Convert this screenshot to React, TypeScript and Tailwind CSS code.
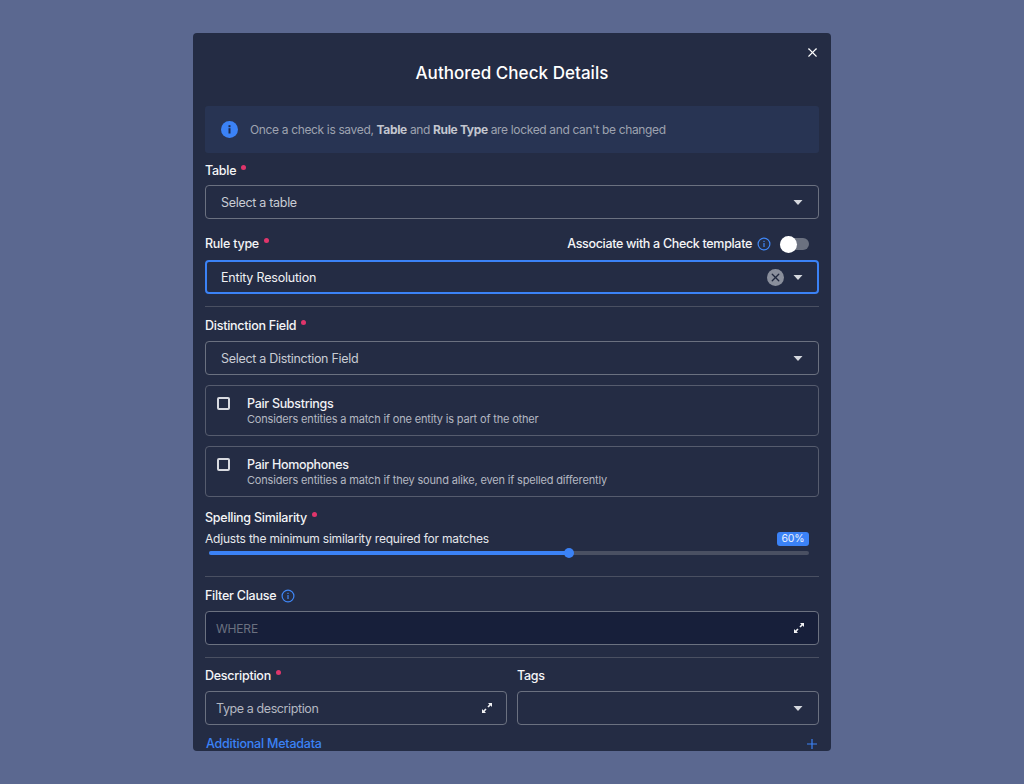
import React from 'react';
import { X } from 'lucide-react';

const Dot = () => <span className="ml-[5px] mb-[7px] w-[5px] h-[5px] rounded-full bg-[#e0356b]" />;

const Caret = () => (
  <svg width="10" height="5" viewBox="0 0 10 5" className="shrink-0">
    <path d="M0.5 0 H9.5 L5 5 Z" fill="#d5d8de" />
  </svg>
);

const InfoOutline = () => (
  <svg width="14" height="14" viewBox="0 0 14 14" fill="none" className="shrink-0">
    <circle cx="7" cy="7" r="5.9" stroke="#3f86f6" strokeWidth="1.2" />
    <rect x="6.4" y="6" width="1.2" height="4" fill="#3f86f6" />
    <rect x="6.4" y="3.8" width="1.2" height="1.2" fill="#3f86f6" />
  </svg>
);

const Expand = () => (
  <svg width="10" height="10" viewBox="0 0 10 10" className="shrink-0" fill="#f1f2f4">
    <path d="M6 0 H10 V4 L8.6 2.6 L6.6 4.6 L5.4 3.4 L7.4 1.4 Z" />
    <path d="M4 10 H0 V6 L1.4 7.4 L3.4 5.4 L4.6 6.6 L2.6 8.6 Z" />
  </svg>
);

const Label = ({ text, required }: { text: string; required?: boolean }) => (
  <div className="flex items-center h-[18px] text-[12.5px] tracking-[-0.25px] font-medium text-[#f4f5f7]">
    {text}
    {required && <Dot />}
  </div>
);

const Select = ({ text }: { text: string }) => (
  <div className="h-[34px] flex items-center justify-between pl-[15px] pr-[15px] border border-[#6b7180] rounded-[4px] text-[12.5px] tracking-[-0.3px] text-[#c9ccd4]">
    <span className="pt-[2px]">{text}</span>
    <Caret />
  </div>
);

const Divider = () => <div className="h-px bg-[#4a5062]" />;

const CheckCard = ({ title, desc }: { title: string; desc: string }) => (
  <div className="h-[51px] flex border border-[#565c6e] rounded-[4px] pl-[11px] pt-[9px]">
    <span className="mt-[2px] w-[13px] h-[13px] border-2 border-[#d8dae0] rounded-[2px] shrink-0" />
    <div className="ml-[17px]">
      <div className="text-[12.5px] tracking-[-0.3px] leading-[17px] font-medium text-[#f0f1f4]">{title}</div>
      <div className="text-[11px] leading-[15px] tracking-[-0.17px] text-[#b4b8c2]">{desc}</div>
    </div>
  </div>
);

export default function App() {
  return (
    <div className="min-h-[784px] bg-[#5b6890] flex justify-center pt-[33px] font-['Inter',sans-serif]">
      <div className="relative w-[638px] h-[718px] bg-[#242c44] rounded-[4px] overflow-hidden px-[12px]">
        <button className="absolute top-[12px] right-[11px] text-white">
          <X size={15} strokeWidth={1.75} />
        </button>

        <h2 className="pt-[28px] h-[73px] text-center text-[17px] leading-[24px] font-medium tracking-[0.05px] text-white">
          Authored Check Details
        </h2>

        {/* Notice */}
        <div className="h-[47px] flex items-center gap-[12px] pl-[16px] bg-[#283453] rounded-[3px] text-[12px] tracking-[-0.35px] text-[#9ea3b0]">
          <svg width="17" height="17" viewBox="0 0 17 17" className="shrink-0">
            <circle cx="8.5" cy="8.5" r="8.5" fill="#3b82f6" />
            <rect x="7.5" y="7.2" width="2" height="5.3" fill="#1e2a4a" />
            <rect x="7.5" y="4.2" width="2" height="2" fill="#1e2a4a" />
          </svg>
          <span className="pt-[1px]">
            Once a check is saved, <b className="font-bold text-[#c3c6cf]">Table</b> and{' '}
            <b className="font-bold text-[#c3c6cf]">Rule Type</b> are locked and can't be changed
          </span>
        </div>

        <div className="mt-[9px] mb-[5px]">
          <Label text="Table" required />
        </div>
        <Select text="Select a table" />

        <div className="mt-[16px] mb-[7px] flex items-center justify-between h-[18px]">
          <Label text="Rule type" required />
          <div className="flex items-center text-[12.5px] tracking-[-0.32px] font-medium text-[#f4f5f7]">
            <span>Associate with a Check template</span>
            <span className="ml-[5px]"><InfoOutline /></span>
            <span className="relative ml-[9px] mr-[10px] w-[29px] h-[12px] rounded-full bg-[#6b7180]">
              <span className="absolute left-0 top-[-2.5px] w-[17px] h-[17px] rounded-full bg-white" />
            </span>
          </div>
        </div>
        <div className="h-[34px] flex items-center justify-between pl-[14px] pr-[14px] border-2 border-[#3b82f6] rounded-[4px] text-[12.5px] tracking-[-0.2px] text-[#f0f1f4]">
          <span className="pt-[2px]">Entity Resolution</span>
          <div className="flex items-center gap-[9px]">
            <span className="w-[17px] h-[17px] rounded-full bg-[#8a8f9c] flex items-center justify-center text-[#20283e]">
              <X size={13} strokeWidth={2.5} />
            </span>
            <Caret />
          </div>
        </div>

        <div className="mt-[12px]"><Divider /></div>

        <div className="mt-[10px] mb-[6px]">
          <Label text="Distinction Field" required />
        </div>
        <Select text="Select a Distinction Field" />

        <div className="mt-[10px]">
          <CheckCard title="Pair Substrings" desc="Considers entities a match if one entity is part of the other" />
        </div>
        <div className="mt-[10px]">
          <CheckCard title="Pair Homophones" desc="Considers entities a match if they sound alike, even if spelled differently" />
        </div>

        <div className="mt-[12px]">
          <Label text="Spelling Similarity" required />
        </div>
        <div className="mt-[3px] pr-[10px] flex items-center justify-between h-[18px] text-[12px] tracking-[-0.2px] text-[#e6e8ec]">
          <span>Adjusts the minimum similarity required for matches</span>
          <span className="h-[14px] w-[32px] justify-center flex items-center rounded-[3px] bg-[#3b82f6] text-[10.5px] text-[#e8effc]">60%</span>
        </div>

        {/* Slider */}
        <div className="relative mt-[3px] ml-[4px] mr-[10px] h-[4px] rounded-full bg-[#4a5062]">
          <div className="h-full w-[60%] rounded-full bg-[#3b82f6]" />
          <span className="absolute left-[60%] top-[-3px] -ml-[5px] w-[10px] h-[10px] rounded-full bg-[#3b82f6]" />
        </div>

        <div className="mt-[21px]"><Divider /></div>

        <div className="mt-[10px] mb-[6px] flex items-center gap-[5px]">
          <Label text="Filter Clause" />
          <InfoOutline />
        </div>
        <div className="h-[34px] flex items-center justify-between pl-[10px] pr-[14px] border border-[#6b7180] rounded-[4px] bg-[#171f3a] text-[12px] tracking-[-0.2px] text-[#6b7180]">
          <span className="pt-[2px]">WHERE</span>
          <Expand />
        </div>

        <div className="mt-[12px]"><Divider /></div>

        <div className="mt-[9px] grid grid-cols-2 gap-[10px]">
          <div>
            <div className="mb-[6px]"><Label text="Description" required /></div>
            <div className="h-[34px] flex items-center justify-between pl-[10px] pr-[14px] border border-[#6b7180] rounded-[4px] text-[12.5px] tracking-[-0.4px] text-[#b4b8c2]">
              <span className="pt-[2px]">Type a description</span>
              <Expand />
            </div>
          </div>
          <div>
            <div className="mb-[6px]"><Label text="Tags" /></div>
            <div className="h-[34px] flex items-center justify-end pr-[15px] border border-[#6b7180] rounded-[4px]">
              <Caret />
            </div>
          </div>
        </div>

        <div className="mt-[11px] ml-[1px] flex items-center justify-between text-[12.5px] leading-[16px] tracking-[-0.22px] font-medium text-[#3b82f6]">
          <span>Additional Metadata</span>
          <svg width="10" height="10" viewBox="0 0 10 10" className="mr-[2px]">
            <path d="M5 0 V10 M0 5 H10" stroke="#3b82f6" strokeWidth="1.2" />
          </svg>
        </div>
      </div>
    </div>
  );
}
